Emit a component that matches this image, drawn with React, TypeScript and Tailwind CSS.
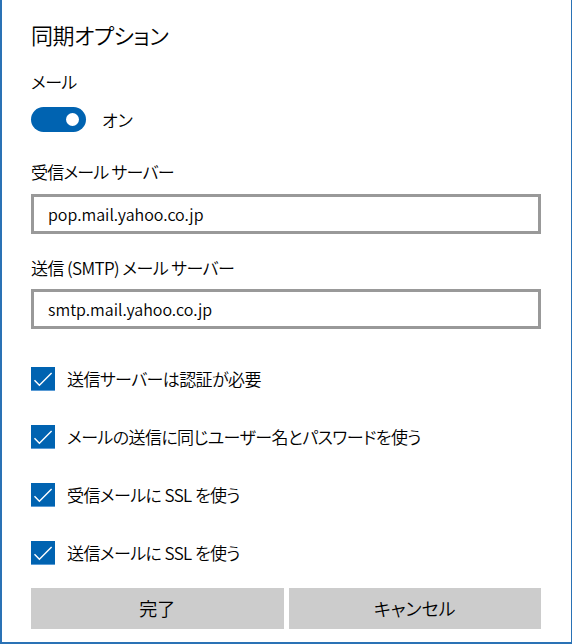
import React from "react";

const font = "font-['Noto_Sans_CJK_JP','Noto_Sans',sans-serif] [font-feature-settings:'palt'] font-[350]";

function Check({ label }: { label: string }) {
  return (
    <div className="flex items-center h-[24px]">
      <div className="w-[24px] h-[24px] bg-[#0063b1] border-b border-[#5a9bd5] flex items-center justify-center shrink-0">
        <svg width="24" height="24" viewBox="0 0 24 24" fill="none">
          <path d="M3.5 13.2 L8.4 18.3 L20.6 6" stroke="white" strokeWidth="1.4" />
        </svg>
      </div>
      <span className="ml-[12px] text-[17px] tracking-[-0.6px] text-black leading-[24px]">{label}</span>
    </div>
  );
}

function TextBox({ value }: { value: string }) {
  return (
    <div className="h-[40px] w-[510px] border-[3px] border-[#999999] bg-white flex items-center pl-[14px]">
      <span className="text-[16px] text-black">{value}</span>
    </div>
  );
}

export default function App() {
  return (
    <div
      className={`w-[572px] h-[644px] bg-white border-l-2 border-r border-b-2 border-[#2a72b5] pl-[29px] flex flex-col ${font}`}
    >
      <h1 className="pt-[20px] text-[22px] tracking-[-0.5px] leading-[28px] text-black font-[350]">同期オプション</h1>

      <div className="mt-[22px] text-[17px] tracking-[-0.6px] leading-[24px] text-black">メール</div>
      <div className="mt-[13px] flex items-center h-[25px]">
        <div className="w-[55px] h-[25px] rounded-full bg-[#0063b1] relative shrink-0">
          <div className="absolute right-[7px] top-[6px] w-[13px] h-[13px] rounded-full bg-white" />
        </div>
        <span className="ml-[16px] text-[17px] text-black">オン</span>
      </div>

      <div className="mt-[28px] text-[17px] tracking-[-0.8px] leading-[24px] text-black">受信メール サーバー</div>
      <div className="mt-[10px]">
        <TextBox value="pop.mail.yahoo.co.jp" />
      </div>

      <div className="mt-[22px] text-[17px] tracking-[-0.6px] leading-[24px] text-black">送信 (SMTP) メール サーバー</div>
      <div className="mt-[9px]">
        <TextBox value="smtp.mail.yahoo.co.jp" />
      </div>

      <div className="mt-[38px] flex flex-col gap-[34px]">
        <Check label="送信サーバーは認証が必要" />
        <Check label="メールの送信に同じユーザー名とパスワードを使う" />
        <Check label="受信メールに SSL を使う" />
        <Check label="送信メールに SSL を使う" />
      </div>

      <div className="mt-[23px] flex gap-[5px] w-[510px]">
        <button className="flex-1 h-[41px] bg-[#cccccc] text-[18px] text-black">完了</button>
        <button className="flex-1 h-[41px] bg-[#cccccc] text-[18px] text-black">キャンセル</button>
      </div>
    </div>
  );
}
